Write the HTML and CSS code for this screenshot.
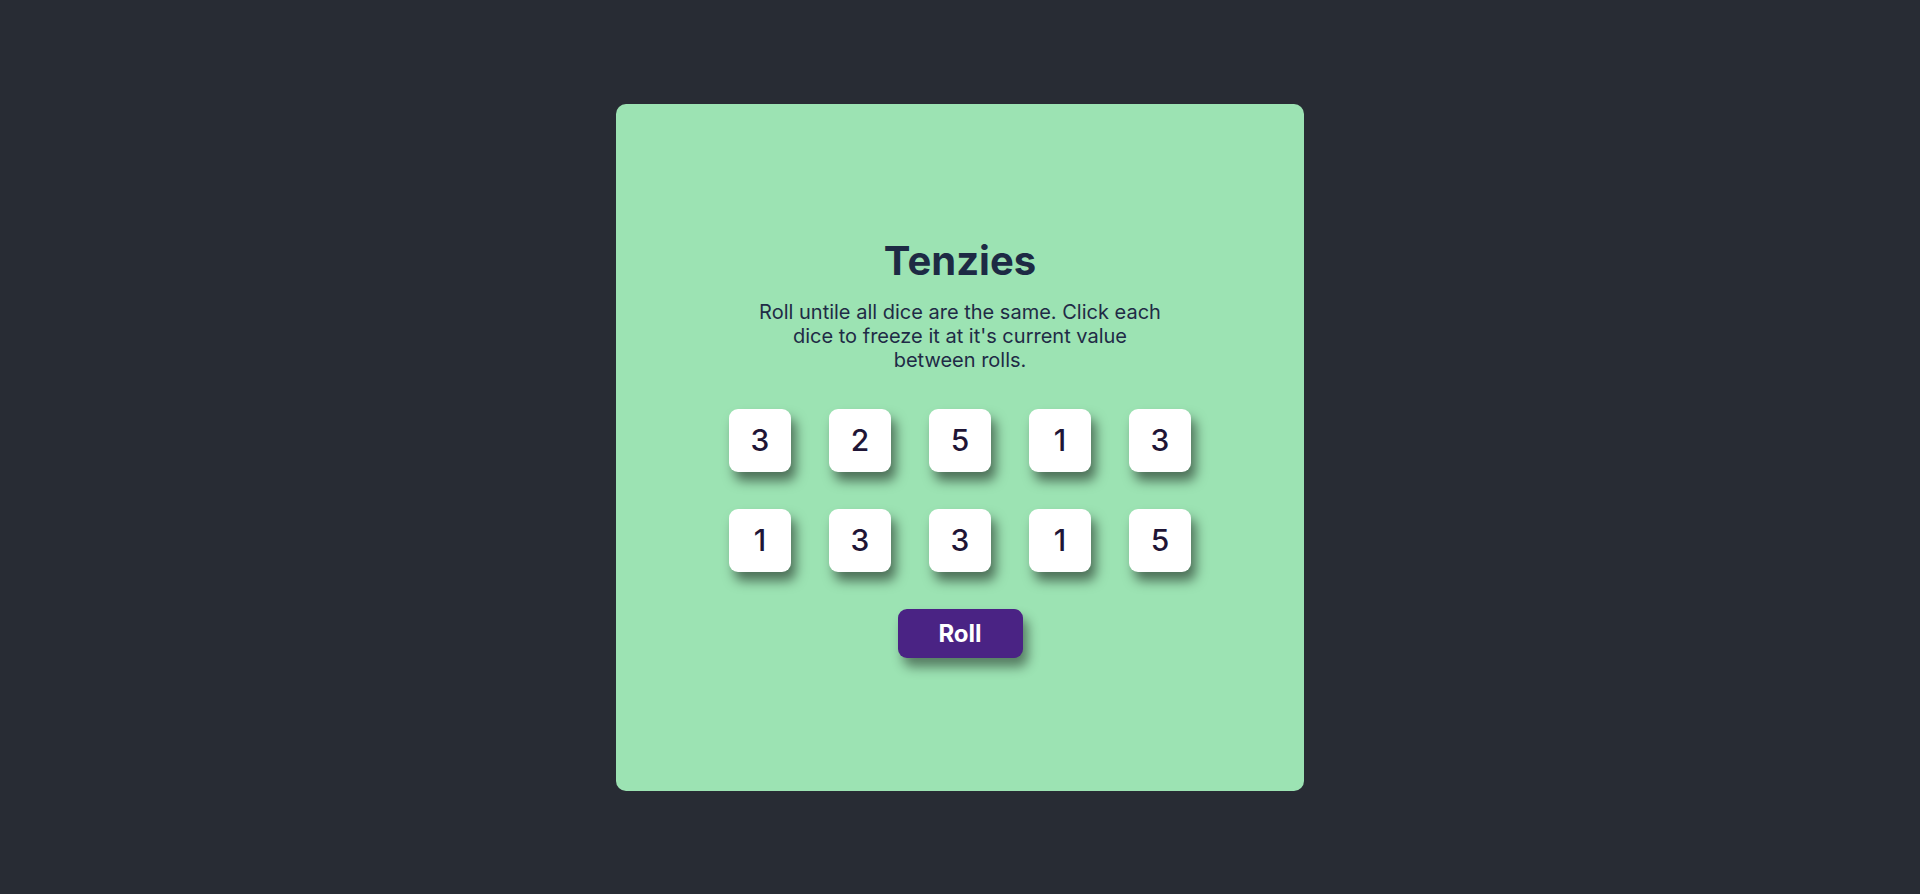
FILE: index.html
```html
<!DOCTYPE html>
<html lang="en">
<head>
<meta charset="utf-8">
<title>Tenzies</title>
<link rel="stylesheet" href="styles.css">
</head>
<body>
<main class="board">
  <h1 class="title">Tenzies</h1>
  <p class="instructions">Roll untile all dice are the same. Click each dice to freeze it at it's current value between rolls.</p>
  <div class="dice">
    <button class="die">3</button>
    <button class="die">2</button>
    <button class="die">5</button>
    <button class="die">1</button>
    <button class="die">3</button>
    <button class="die">1</button>
    <button class="die">3</button>
    <button class="die">3</button>
    <button class="die">1</button>
    <button class="die">5</button>
  </div>
  <button class="roll">Roll</button>
</main>
</body>
</html>
```

FILE: styles.css
```css
* { box-sizing: border-box; }
html, body { height: 100%; }
body {
  margin: 0;
  background: #282c34;
  font-family: Inter, "Noto Sans", sans-serif;
  display: flex;
  align-items: center;
  justify-content: center;
}
.board {
  width: 688px;
  height: 687px;
  background: #9ce3b3;
  border-radius: 10px;
  display: flex;
  flex-direction: column;
  align-items: center;
  justify-content: center;
}
.title {
  margin: 0;
  font-size: 40px;
  font-weight: 700;
  line-height: 48px;
  color: #1d2a44;
}
.instructions {
  margin: 15px 0 0;
  max-width: 420px;
  text-align: center;
  font-size: 20px;
  line-height: 24px;
  font-weight: 400;
  color: #1f2b46;
}
.dice {
  margin-top: 37px;
  display: grid;
  grid-template-columns: repeat(5, 62px);
  grid-auto-rows: 63px;
  column-gap: 38px;
  row-gap: 37px;
}
.die {
  border: none;
  margin: 0;
  padding: 0;
  background: #fff;
  border-radius: 9px;
  font-family: Inter, sans-serif;
  font-size: 30px;
  font-weight: 500;
  color: #1f1536;
  box-shadow: 5px 9px 12px rgba(0, 0, 0, 0.5);
  cursor: pointer;
}
.roll {
  margin-top: 37px;
  width: 125px;
  height: 49px;
  border: none;
  border-radius: 9px;
  background: #4a2384;
  color: #fff;
  font-family: Inter, sans-serif;
  font-size: 24px;
  font-weight: 700;
  box-shadow: 5px 9px 12px rgba(0, 0, 0, 0.45);
  cursor: pointer;
}
```
